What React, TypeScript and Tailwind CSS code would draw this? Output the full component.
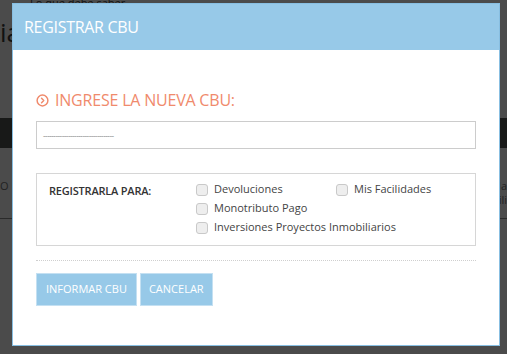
import React from 'react';

const options = [
  ['Devoluciones', 'Mis Facilidades'],
  ['Monotributo Pago'],
  ['Inversiones Proyectos Inmobiliarios'],
];

const Check: React.FC<{ label: string }> = ({ label }) => (
  <label className="flex items-center gap-[6px] h-[19px] whitespace-nowrap">
    <span className="shrink-0 w-[12px] h-[12px] rounded-[3px] border border-[#c9c9c9] bg-[#eeeeee]" />
    <span className="text-[11px] text-[#444]">{label}</span>
  </label>
);

const App: React.FC = () => {
  return (
    <div className="relative w-[507px] h-[354px] overflow-hidden bg-[#4b4b4b]" style={{ fontFamily: '"Open Sans", "Noto Sans", sans-serif' }}>
      {/* page behind the overlay */}
      <div className="flex flex-col">
        <div className="h-[6px] text-[11px] leading-[6px] text-[#111] pl-[30px] overflow-hidden">Lo que debe saber</div>
        <div className="h-[32px] pt-[12px] text-[26px] leading-[28px] text-[#111]">ia</div>
        <div className="h-[80px]" />
        <div className="h-[30px] bg-[#181918]" />
        <div className="h-[30px]" />
        <div className="flex justify-between h-[14px] text-[11px] text-[#222]">
          <span>O E</span>
          <span>Ma</span>
        </div>
        <div className="flex justify-end h-[14px] text-[11px] text-[#222]">cili</div>
        <div className="h-[12px]" />
        <div className="h-[1px] bg-[#2a2a2a]" />
      </div>

      {/* modal */}
      <div className="absolute left-[12px] top-[3px] w-[488px] h-[343px] bg-white border border-[#88bfe2] flex flex-col">
        <div className="h-[46px] bg-[#97c9e8] flex items-center px-[11px]">
          <span className="text-[16px] text-white tracking-[-0.3px]">REGISTRAR CBU</span>
        </div>
        <div className="flex flex-col px-[23px] pt-[40px]">
          <div className="flex items-center gap-[6px] h-[20px]">
            <svg width="13" height="13" viewBox="0 0 14 14" fill="none">
              <circle cx="7" cy="7" r="5.8" stroke="#f08a6c" strokeWidth="1.6" />
              <path d="M6 4.6 L8.3 7 L6 9.4" stroke="#f08a6c" strokeWidth="1.6" strokeLinecap="round" strokeLinejoin="round" />
            </svg>
            <span className="text-[16px] text-[#f08a6c] tracking-[-0.2px]">INGRESE LA NUEVA CBU:</span>
          </div>
          <div className="mt-[11px] h-[28px] border border-[#cccccc] flex items-center px-[6px]">
            <span className="text-[8px] text-[#777] tracking-[-0.5px]">----------------------------------</span>
          </div>
          <div className="mt-[24px] h-[73px] border border-[#d6d6d6] flex pl-[12px] pt-[6px]">
            <div className="w-[147px] pt-[1px] text-[11px] font-semibold text-[#333] leading-[19px] tracking-[-0.2px]">REGISTRARLA PARA:</div>
            <div className="flex flex-col">
              {options.map((row, i) => (
                <div key={i} className="flex">
                  <div className="w-[140px]"><Check label={row[0]} /></div>
                  {row[1] && <Check label={row[1]} />}
                </div>
              ))}
            </div>
          </div>
          <div className="mt-[14px] border-t border-dotted border-[#cfcfcf]" />
          <div className="mt-[12px] flex gap-[3px]">
            <button className="h-[33px] px-[9px] bg-[#97c9e8] text-white text-[11px] border border-[#c4e0f2]">INFORMAR CBU</button>
            <button className="h-[33px] px-[8px] bg-[#97c9e8] text-white text-[11px] border border-[#c4e0f2]">CANCELAR</button>
          </div>
        </div>
      </div>
    </div>
  );
};

export default App;
